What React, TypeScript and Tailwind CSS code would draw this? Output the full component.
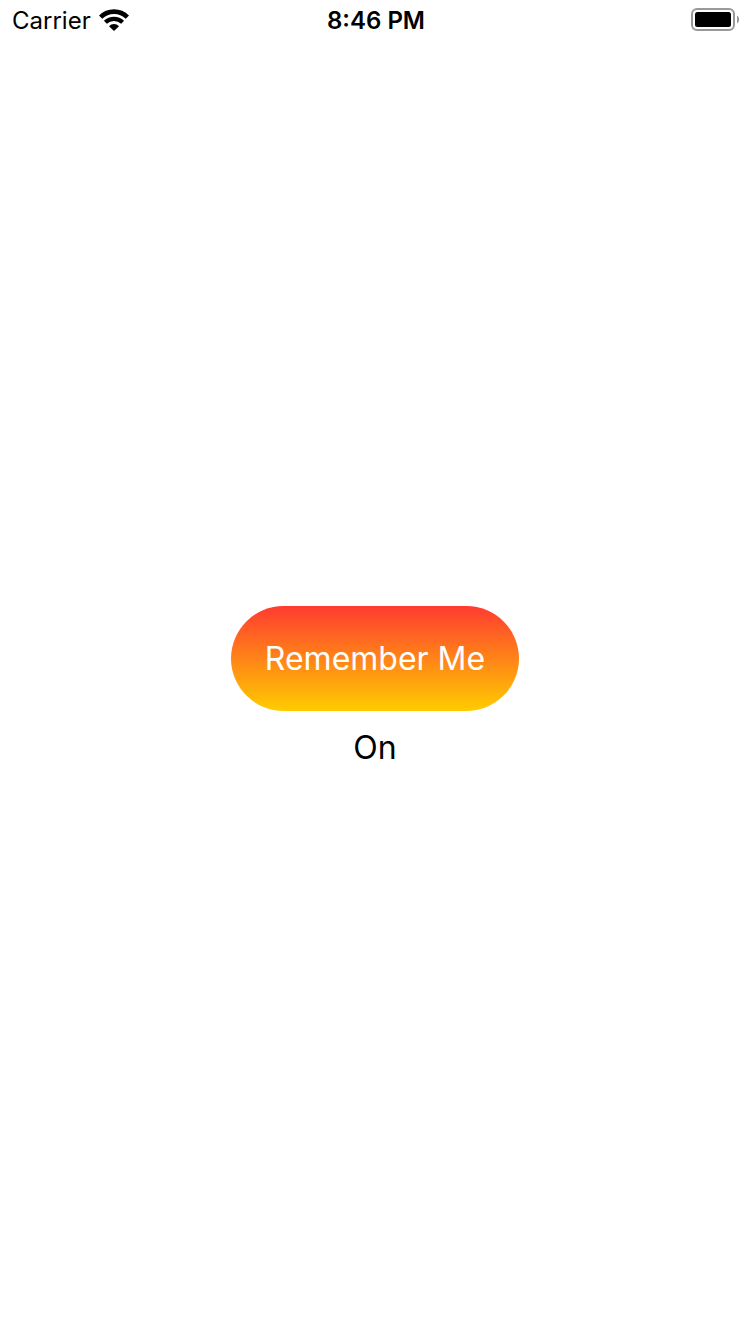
import { useState } from "react";

function WifiIcon() {
  return (
    <svg width="30" height="24" viewBox="0 0 30 24" fill="none" stroke="black" aria-hidden="true">
      <path d="M1.6 8.2a19.1 19.1 0 0 1 26.8 0" strokeWidth="4.7" />
      <path d="M6.4 13.3a12.3 12.3 0 0 1 17.2 0" strokeWidth="4.2" />
      <path d="M15 22l-5-4.8a7 7 0 0 1 10 0z" fill="black" stroke="none" />
    </svg>
  );
}

function BatteryIcon() {
  return (
    <svg width="49" height="23" viewBox="0 0 49 23" fill="none" aria-hidden="true">
      <rect x="1" y="1" width="42" height="21" rx="5" stroke="#999" strokeWidth="2" />
      <rect x="4" y="4" width="36" height="15" rx="2.5" fill="black" />
      <path d="M46 7.5c2.8 1.4 2.8 6.6 0 8z" fill="#999" />
    </svg>
  );
}

export default function App() {
  const [on, setOn] = useState(true);
  return (
    <div className="flex min-h-screen flex-col bg-white font-['Inter','Liberation_Sans',sans-serif] text-black">
      <header className="grid h-10 grid-cols-3 items-start pt-2 pr-2.5 pl-3 text-[24px] leading-[26px]">
        <div className="flex items-center gap-2">
          <span>Carrier</span>
          <WifiIcon />
        </div>
        <time className="text-center font-semibold">8:46 PM</time>
        <div className="flex justify-end">
          <BatteryIcon />
        </div>
      </header>
      <main className="flex flex-1 flex-col items-center justify-center gap-4 text-[32px] leading-[41px]">
        <button
          type="button"
          aria-pressed={on}
          onClick={() => setOn(!on)}
          className="rounded-full bg-linear-to-b/srgb from-[#ff3b30] to-[#ffcc00] px-[34px] py-8 text-white"
        >
          Remember Me
        </button>
        <p>{on ? "On" : "Off"}</p>
      </main>
    </div>
  );
}
